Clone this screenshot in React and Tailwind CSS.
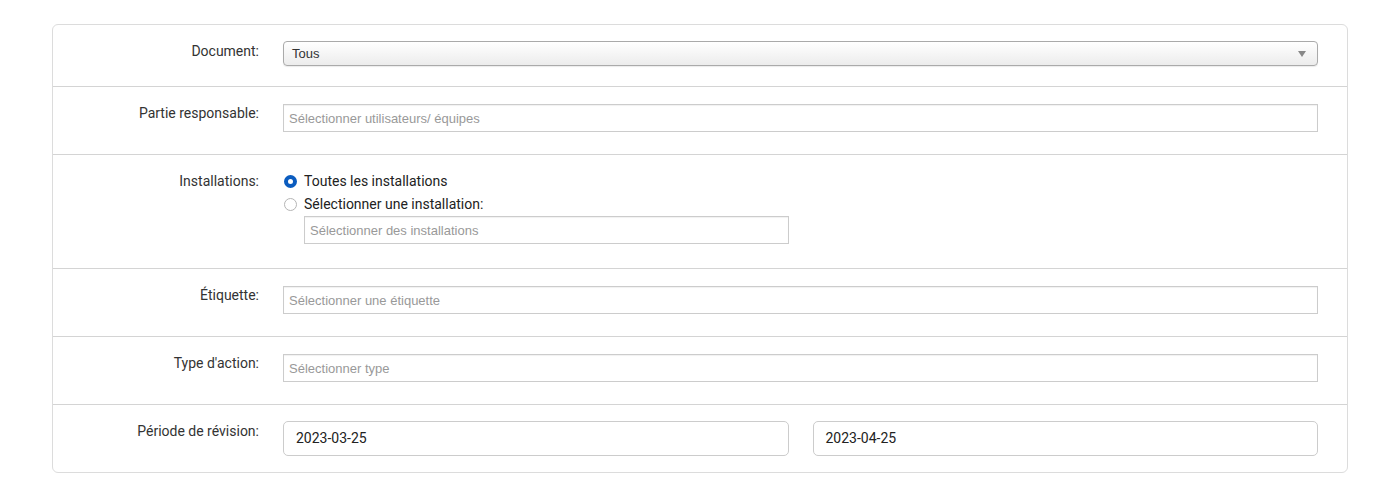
import React from 'react';

const labelCls = "w-[206px] shrink-0 text-right text-[14px] leading-5 text-[#333] font-['Roboto',sans-serif]";
const inputCls = "h-[28px] border border-[#ccc] bg-white px-[5px] pt-px text-[13px] text-[#999] font-['Liberation_Sans',Arial,sans-serif] flex items-center shadow-[inset_0_1px_1px_rgba(0,0,0,0.06)]";

const Row = ({ label, children, pb = 'pb-[22px]', last }) => (
  <div className={`flex pt-4 ${pb} pr-[29px] ${last ? '' : 'border-b border-[#d4d4d4]'}`}>
    <div className={labelCls}>{label}</div>
    <div className="ml-6 flex-1 min-w-0">{children}</div>
  </div>
);

const Placeholder = ({ text }) => (
  <div className={`${inputCls} w-full mt-px`}>{text}</div>
);

const Radio = ({ checked, label }) => (
  <div className="flex items-center h-[23px]">
    {checked ? (
      <span className="w-[13px] h-[13px] rounded-full border-[4px] border-[#0b5cbf] bg-white ml-px" />
    ) : (
      <span className="w-[13px] h-[13px] rounded-full border border-[#b5b5b5] bg-white ml-px" />
    )}
    <span className="ml-[7px] text-[14px] text-[#222] font-['Roboto',sans-serif]">{label}</span>
  </div>
);

export default function App() {
  return (
    <div className="min-h-[486px] bg-white pt-6 px-[52px] pb-[14px]">
      <div className="border border-[#dcdcdc] rounded-[6px] bg-white w-[1296px]">
        <Row label="Document:" pb="pb-5">
          <div className="h-[25px] rounded-[4px] border border-[#aaa] bg-gradient-to-b from-white to-[#ececec] flex items-center justify-between pl-[8px] pr-[11px] shadow-[0_1px_1px_rgba(0,0,0,0.08)]">
            <span className="text-[13px] text-[#333] font-['Liberation_Sans',Arial,sans-serif]">Tous</span>
            <svg width="8" height="6" viewBox="0 0 8 6"><path d="M0 0h8L4 6z" fill="#888" /></svg>
          </div>
        </Row>
        <Row label="Partie responsable:">
          <Placeholder text="Sélectionner utilisateurs/ équipes" />
        </Row>
        <Row label="Installations:" pb="pb-6">
          <div className="-mt-[1px]">
            <Radio checked label="Toutes les installations" />
            <Radio label="Sélectionner une installation:" />
            <div className="pl-[21px]">
              <div className={`${inputCls} w-[485px]`}>Sélectionner des installations</div>
            </div>
          </div>
        </Row>
        <Row label="Étiquette:">
          <Placeholder text="Sélectionner une étiquette" />
        </Row>
        <Row label="Type d'action:">
          <Placeholder text="Sélectionner type" />
        </Row>
        <Row label="Période de révision:" pb="pb-4" last>
          <div className="flex gap-6">
            <div className="flex-1 h-[35px] border border-[#ccc] rounded-[5px] flex items-center px-3 text-[14px] text-[#222] font-['Roboto',sans-serif]">2023-03-25</div>
            <div className="flex-1 h-[35px] border border-[#ccc] rounded-[5px] flex items-center px-3 text-[14px] text-[#222] font-['Roboto',sans-serif]">2023-04-25</div>
          </div>
        </Row>
      </div>
    </div>
  );
}
